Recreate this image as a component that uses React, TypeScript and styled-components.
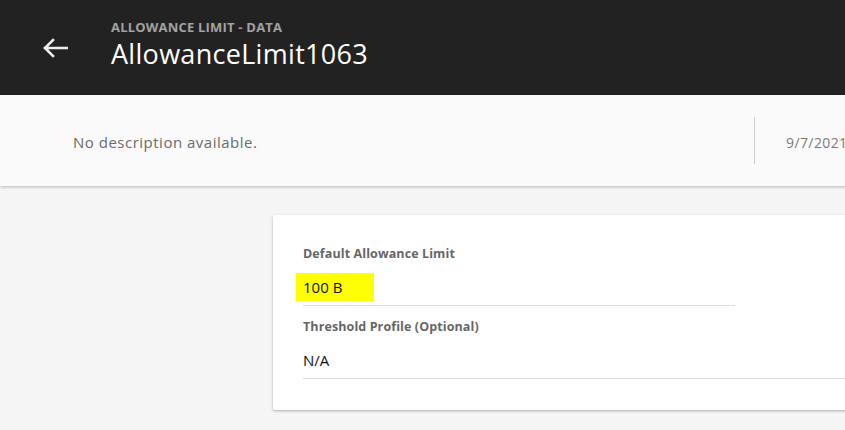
import styled, { createGlobalStyle } from "styled-components";

const GlobalStyle = createGlobalStyle`
  html, body {
    margin: 0;
    padding: 0;
    background: #f5f5f5;
    overflow: hidden;
    font-family: "Open Sans", "Noto Sans", sans-serif;
  }
`;

function BackArrow() {
  return (
    <svg width="26" height="20" viewBox="0 0 26 20" fill="none">
      <path
        d="M25 10H3M11 2L3 10l8 8"
        stroke="#eeeeee"
        strokeWidth="2.6"
        strokeLinecap="square"
      />
    </svg>
  );
}

function App() {
  return (
    <>
      <GlobalStyle />
      <Page>
        <Header>
          <BackButton aria-label="Back">
            <BackArrow />
          </BackButton>
          <Titles>
            <Overline>ALLOWANCE LIMIT - DATA</Overline>
            <Title>AllowanceLimit1063</Title>
          </Titles>
        </Header>

        <InfoBand>
          <Description>No description available.</Description>
          <Divider />
          <DateText>9/7/2021</DateText>
        </InfoBand>

        <Content>
          <Card>
            <Field width="432px">
              <Label>Default Allowance Limit</Label>
              <Value>
                <Highlight>100 B</Highlight>
              </Value>
            </Field>
            <Field>
              <Label>Threshold Profile (Optional)</Label>
              <Value>N/A</Value>
            </Field>
          </Card>
        </Content>
      </Page>
    </>
  );
}

const Page = styled.div`
  width: 1100px;
  min-height: 430px;
  background: #f5f5f5;
`;

const Header = styled.header`
  height: 95px;
  background: #222222;
  display: flex;
  align-items: center;
  box-sizing: border-box;
  padding-left: 42px;
`;

const BackButton = styled.button`
  background: none;
  border: none;
  padding: 0;
  margin: 0 43px 0 0;
  display: flex;
  cursor: pointer;
`;

const Titles = styled.div`
  display: flex;
  flex-direction: column;
  margin-top: -6px;
`;

const Overline = styled.div`
  color: #a3a3a3;
  font-size: 13px;
  font-weight: 700;
  letter-spacing: 0.2px;
  line-height: 16px;
`;

const Title = styled.h1`
  margin: 3px 0 0;
  color: #ffffff;
  font-size: 27px;
  font-weight: 400;
  line-height: 32px;
  letter-spacing: 0.3px;
`;

const InfoBand = styled.section`
  height: 91px;
  background: #fafafa;
  display: flex;
  align-items: center;
  box-shadow: 0 1px 3px rgba(0, 0, 0, 0.25);
`;

const Description = styled.p`
  margin: 3px 0 0 73px;
  width: 681px;
  color: #6b6b6b;
  font-size: 15px;
  letter-spacing: 0.5px;
`;

const Divider = styled.div`
  width: 1px;
  height: 47px;
  background: #cccccc;
  margin-right: 31px;
`;

const DateText = styled.span`
  margin-top: 3px;
  color: #7a7a7a;
  font-size: 14px;
  letter-spacing: 0.4px;
`;

const Content = styled.main`
  padding: 29px 0 0 273px;
`;

const Card = styled.div`
  width: 760px;
  height: 195px;
  box-sizing: border-box;
  background: #ffffff;
  border-radius: 2px;
  box-shadow: 0 1px 3px rgba(0, 0, 0, 0.3);
  padding: 30px 0 0 30px;
`;

const Field = styled.div<{ width?: string }>`
  width: ${(p) => p.width ?? "auto"};
  border-bottom: 1px solid #dddddd;
  padding-bottom: 5px;
  & + & {
    margin-top: 12px;
  }
`;

const Label = styled.div`
  color: #666666;
  font-size: 12.5px;
  font-weight: 700;
  line-height: 18px;
  letter-spacing: 0.1px;
`;

const Value = styled.div`
  margin-top: 11px;
  height: 26px;
  display: flex;
  align-items: center;
  color: #111111;
  font-size: 15px;
`;

const Highlight = styled.span`
  background: #ffff00;
  margin-left: -7px;
  padding: 4px 32px 4px 7px;
`;

export default App;
